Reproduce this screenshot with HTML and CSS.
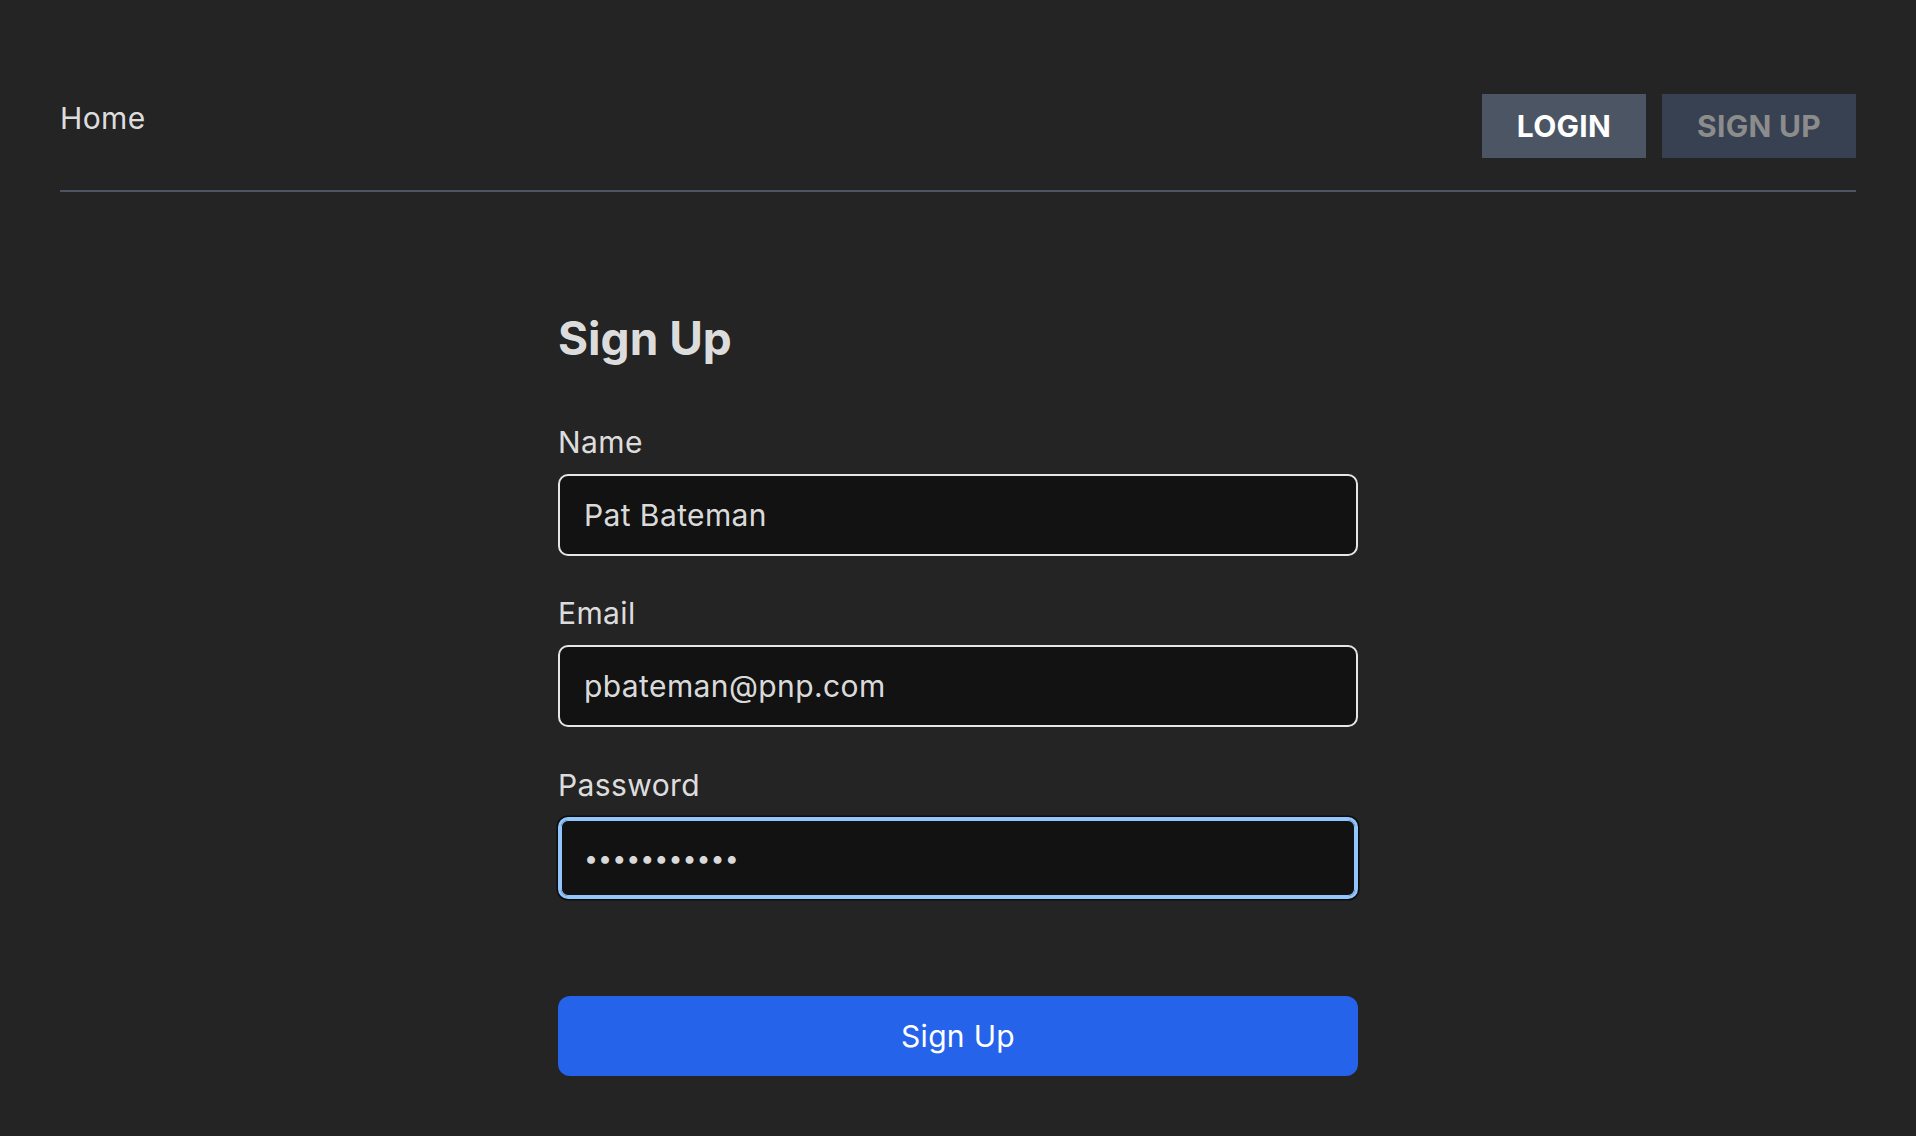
FILE: index.html
```html
<!DOCTYPE html>
<html lang="en">
<head>
<meta charset="utf-8">
<title>Sign Up</title>
<link rel="stylesheet" href="styles.css">
</head>
<body>
<header class="topbar">
  <a class="home-link" href="#">Home</a>
  <nav class="auth-nav">
    <button class="nav-btn nav-btn-active" type="button">LOGIN</button>
    <button class="nav-btn nav-btn-muted" type="button">SIGN UP</button>
  </nav>
</header>
<main class="content">
  <form class="signup-form">
    <h1 class="form-title">Sign Up</h1>
    <div class="field">
      <label class="field-label" for="name">Name</label>
      <input class="field-input" id="name" type="text" value="Pat Bateman">
    </div>
    <div class="field">
      <label class="field-label" for="email">Email</label>
      <input class="field-input" id="email" type="email" value="pbateman@pnp.com">
    </div>
    <div class="field">
      <label class="field-label" for="password">Password</label>
      <input class="field-input field-input-focused" id="password" type="password" value="abcdefghijk">
    </div>
    <button class="submit-btn" type="button">Sign Up</button>
  </form>
</main>
</body>
</html>
```

FILE: styles.css
```css
* {
  box-sizing: border-box;
}

html, body {
  margin: 0;
  background: #242424;
}

body {
  padding: 0 60px;
  font-family: Inter, "Noto Sans", "Liberation Sans", sans-serif;
  color: rgba(255, 255, 255, 0.87);
  min-height: 1136px;
}

.topbar {
  display: flex;
  justify-content: space-between;
  align-items: flex-start;
  padding: 94px 0 32px;
  border-bottom: 2px solid #4b5563;
}

.home-link {
  margin-top: 2px;
  font-size: 30px;
  line-height: 45px;
  letter-spacing: 0.4px;
  color: rgba(255, 255, 255, 0.87);
  text-decoration: none;
}

.auth-nav {
  display: flex;
  gap: 16px;
}

.nav-btn {
  height: 64px;
  padding: 0;
  border: 0;
  border-radius: 0;
  font-family: Inter, "Noto Sans", sans-serif;
  font-size: 30px;
  font-weight: 700;
  line-height: 64px;
  letter-spacing: 0.3px;
  text-align: center;
}

.nav-btn-active {
  width: 164px;
  background: #4b5563;
  color: #ffffff;
}

.nav-btn-muted {
  width: 194px;
  background: #374151;
  color: #8c8c8c;
}

.content {
  width: 800px;
  margin: 0 auto;
  padding-top: 117.5px;
}

.signup-form {
  display: flex;
  flex-direction: column;
}

.form-title {
  margin: 0 0 54px;
  font-size: 46px;
  font-weight: 700;
  line-height: 56px;
  color: rgba(255, 255, 255, 0.87);
}

.field {
  display: flex;
  flex-direction: column;
  margin-bottom: 35.5px;
}

.field-label {
  font-size: 30px;
  line-height: 45px;
  letter-spacing: 0.4px;
  margin-bottom: 9px;
}

.field-input {
  width: 100%;
  height: 82px;
  padding: 0 24px;
  background: #121212;
  border: 2px solid #e6e6e6;
  border-radius: 10px;
  color: rgba(255, 255, 255, 0.87);
  font-family: Inter, "Noto Sans", sans-serif;
  font-size: 30px;
  letter-spacing: 0.4px;
  outline: none;
}

.field-input-focused {
  border: 3px solid #93c5fd;
  padding: 0 23px;
  font-size: 25px;
  letter-spacing: 0;
  box-shadow: inset 0 0 0 1px #93c5fd, 0 0 0 1.5px #0d0d0d;
}

.submit-btn {
  display: block;
  width: 100%;
  height: 80px;
  margin-top: 62px;
  border: 0;
  border-radius: 12px;
  background: #2563eb;
  color: #ffffff;
  font-family: Inter, "Noto Sans", sans-serif;
  font-size: 30px;
  font-weight: 400;
  letter-spacing: 0.3px;
}
```
